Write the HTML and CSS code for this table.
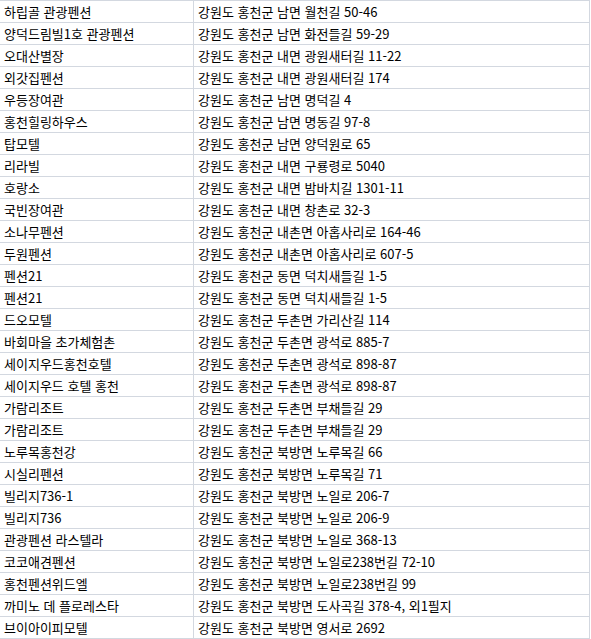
FILE: index.html
```html
<!DOCTYPE html>
<html lang="ko">
<head>
<meta charset="utf-8">
<title>홍천 숙박</title>
<link rel="stylesheet" href="styles.css">
</head>
<body>
<div class="sheet">
  <div class="row"><div class="name">하립골 관광펜션</div><div class="addr">강원도 홍천군 남면 월천길 50-46</div></div>
  <div class="row"><div class="name">양덕드림빌1호 관광펜션</div><div class="addr">강원도 홍천군 남면 화전들길 59-29</div></div>
  <div class="row"><div class="name">오대산별장</div><div class="addr">강원도 홍천군 내면 광원새터길 11-22</div></div>
  <div class="row"><div class="name">외갓집펜션</div><div class="addr">강원도 홍천군 내면 광원새터길 174</div></div>
  <div class="row"><div class="name">우등장여관</div><div class="addr">강원도 홍천군 남면 명덕길 4</div></div>
  <div class="row"><div class="name">홍천힐링하우스</div><div class="addr">강원도 홍천군 남면 명동길 97-8</div></div>
  <div class="row"><div class="name">탑모텔</div><div class="addr">강원도 홍천군 남면 양덕원로 65</div></div>
  <div class="row"><div class="name">리라빌</div><div class="addr">강원도 홍천군 내면 구룡령로 5040</div></div>
  <div class="row"><div class="name">호랑소</div><div class="addr">강원도 홍천군 내면 밤바치길 1301-11</div></div>
  <div class="row"><div class="name">국빈장여관</div><div class="addr">강원도 홍천군 내면 창촌로 32-3</div></div>
  <div class="row"><div class="name">소나무펜션</div><div class="addr">강원도 홍천군 내촌면 아홉사리로 164-46</div></div>
  <div class="row"><div class="name">두원펜션</div><div class="addr">강원도 홍천군 내촌면 아홉사리로 607-5</div></div>
  <div class="row"><div class="name">펜션21</div><div class="addr">강원도 홍천군 동면 덕치새들길 1-5</div></div>
  <div class="row"><div class="name">펜션21</div><div class="addr">강원도 홍천군 동면 덕치새들길 1-5</div></div>
  <div class="row"><div class="name">드오모텔</div><div class="addr">강원도 홍천군 두촌면 가리산길 114</div></div>
  <div class="row"><div class="name">바회마을 초가체험촌</div><div class="addr">강원도 홍천군 두촌면 광석로 885-7</div></div>
  <div class="row"><div class="name">세이지우드홍천호텔</div><div class="addr">강원도 홍천군 두촌면 광석로 898-87</div></div>
  <div class="row"><div class="name">세이지우드 호텔 홍천</div><div class="addr">강원도 홍천군 두촌면 광석로 898-87</div></div>
  <div class="row"><div class="name">가람리조트</div><div class="addr">강원도 홍천군 두촌면 부채들길 29</div></div>
  <div class="row"><div class="name">가람리조트</div><div class="addr">강원도 홍천군 두촌면 부채들길 29</div></div>
  <div class="row"><div class="name">노루목홍천강</div><div class="addr">강원도 홍천군 북방면 노루목길 66</div></div>
  <div class="row"><div class="name">시실리펜션</div><div class="addr">강원도 홍천군 북방면 노루목길 71</div></div>
  <div class="row"><div class="name">빌리지736-1</div><div class="addr">강원도 홍천군 북방면 노일로 206-7</div></div>
  <div class="row"><div class="name">빌리지736</div><div class="addr">강원도 홍천군 북방면 노일로 206-9</div></div>
  <div class="row"><div class="name">관광펜션 라스텔라</div><div class="addr">강원도 홍천군 북방면 노일로 368-13</div></div>
  <div class="row"><div class="name">코코애견펜션</div><div class="addr">강원도 홍천군 북방면 노일로238번길 72-10</div></div>
  <div class="row"><div class="name">홍천펜션위드엘</div><div class="addr">강원도 홍천군 북방면 노일로238번길 99</div></div>
  <div class="row"><div class="name">까미노 데 플로레스타</div><div class="addr">강원도 홍천군 북방면 도사곡길 378-4, 외1필지</div></div>
  <div class="row"><div class="name">브이아이피모텔</div><div class="addr">강원도 홍천군 북방면 영서로 2692</div></div>
</div>
</body>
</html>
```

FILE: styles.css
```css
html, body {
  margin: 0;
  padding: 0;
  background: #ffffff;
}

.sheet {
  width: 590px;
  box-sizing: border-box;
  border-top: 1px solid #d3d8e0;
  border-right: 1px solid #d3d8e0;
  font-family: "Noto Sans CJK KR", "Noto Sans", sans-serif;
  font-size: 13px;
  color: #000000;
}

.row {
  display: grid;
  grid-template-columns: 194px 1fr;
  height: 22px;
  box-sizing: border-box;
  border-bottom: 1px solid #d3d8e0;
}

.name,
.addr {
  display: flex;
  align-items: center;
  padding-left: 4px;
  padding-top: 1px;
  white-space: nowrap;
  line-height: 20px;
}

.name {
  border-right: 1px solid #d3d8e0;
}
```
